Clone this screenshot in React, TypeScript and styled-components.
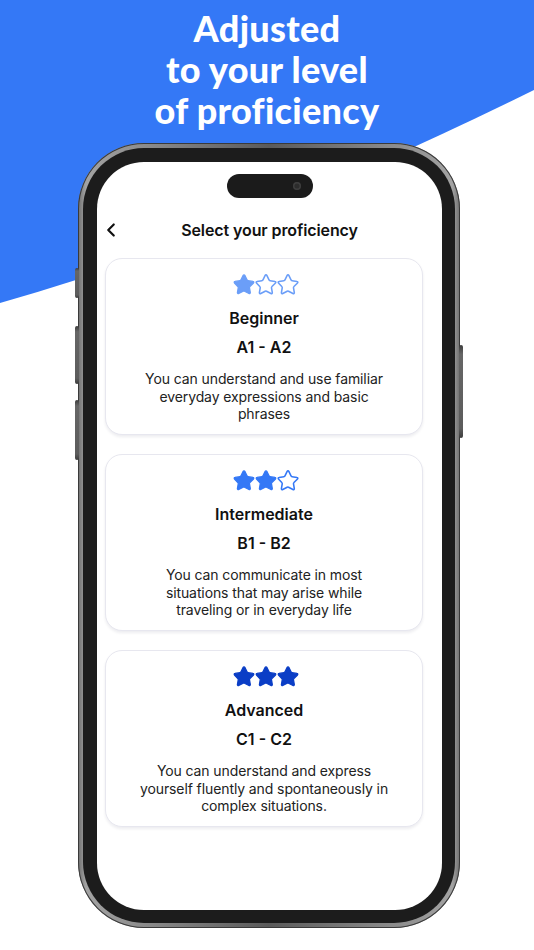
import React from "react";
import styled, { createGlobalStyle } from "styled-components";
import { ChevronLeft } from "lucide-react";

const GlobalStyle = createGlobalStyle`
  html, body {
    margin: 0;
    padding: 0;
    background: #fff;
  }
  * {
    box-sizing: border-box;
  }
`;

type Level = {
  stars: number;
  color: string;
  name: string;
  range: string;
  text: string;
};

const levels: Level[] = [
  {
    stars: 1,
    color: "#6b9ef8",
    name: "Beginner",
    range: "A1 - A2",
    text: "You can understand and use familiar everyday expressions and basic phrases",
  },
  {
    stars: 2,
    color: "#3478f6",
    name: "Intermediate",
    range: "B1 - B2",
    text: "You can communicate in most situations that may arise while traveling or in everyday life",
  },
  {
    stars: 3,
    color: "#0b3ec6",
    name: "Advanced",
    range: "C1 - C2",
    text: "You can understand and express yourself fluently and spontaneously in complex situations.",
  },
];

const StarIcon = ({ color, filled }: { color: string; filled: boolean }) => (
  <svg width="22" height="22" viewBox="0 0 24 24">
    <path
      d="M11.1 2.6a1 1 0 0 1 1.8 0l2.4 4.9a1.6 1.6 0 0 0 1.2.9l5.3.8a1 1 0 0 1 .6 1.7l-3.9 3.8a1.6 1.6 0 0 0-.5 1.4l.9 5.3a1 1 0 0 1-1.5 1l-4.8-2.5a1.6 1.6 0 0 0-1.5 0l-4.8 2.5a1 1 0 0 1-1.5-1l.9-5.3a1.6 1.6 0 0 0-.5-1.4L1.6 10.9a1 1 0 0 1 .6-1.7l5.3-.8a1.6 1.6 0 0 0 1.2-.9z"
      fill={filled ? color : "#fff"}
      stroke={color}
      strokeWidth={filled ? 1.4 : 1.7}
      strokeLinejoin="round"
    />
  </svg>
);

export default function App() {
  return (
    <>
      <GlobalStyle />
      <Page>
        <Backdrop viewBox="0 0 534 950" preserveAspectRatio="none">
          <path d="M0 0H534V90Q240 235 0 303Z" fill="#3478f6" />
        </Backdrop>
        <Headline>
          Adjusted
          <br />
          to your level
          <br />
          of proficiency
        </Headline>
        <PhoneFrame>
          <SideButton $side="left" $top={125} $height={30} />
          <SideButton $side="left" $top={183} $height={58} />
          <SideButton $side="left" $top={257} $height={60} />
          <SideButton $side="right" $top={202} $height={93} />
          <Bezel>
            <Screen>
              <Island>
                <Camera />
              </Island>
              <Header>
                <BackButton>
                  <ChevronLeft size={22} strokeWidth={2.4} color="#111" />
                </BackButton>
                <HeaderTitle>Select your proficiency</HeaderTitle>
                <span />
              </Header>
              <CardList>
                {levels.map((level) => (
                  <Card key={level.name}>
                    <Stars>
                      {[0, 1, 2].map((i) => (
                        <StarIcon key={i} color={level.color} filled={i < level.stars} />
                      ))}
                    </Stars>
                    <CardTitle>{level.name}</CardTitle>
                    <CardRange>{level.range}</CardRange>
                    <CardText>{level.text}</CardText>
                  </Card>
                ))}
              </CardList>
            </Screen>
          </Bezel>
        </PhoneFrame>
      </Page>
    </>
  );
}

const Page = styled.div`
  position: relative;
  width: 534px;
  height: 950px;
  overflow: hidden;
  background: #fff;
  font-family: Inter, "Noto Sans", sans-serif;
`;

const Backdrop = styled.svg`
  position: absolute;
  top: 0;
  left: 0;
  width: 534px;
  height: 950px;
`;

const Headline = styled.h1`
  position: relative;
  margin: 0;
  padding-top: 8px;
  text-align: center;
  color: #fff;
  font-family: Lato, "Open Sans", sans-serif;
  font-weight: 900;
  font-size: 36px;
  line-height: 41px;
  letter-spacing: 0.3px;
`;

const PhoneFrame = styled.div`
  position: relative;
  width: 382px;
  height: 785px;
  margin: 12px 0 0 78px;
  padding: 5px;
  border-radius: 66px;
  background: linear-gradient(90deg, #6e6e6e, #a3a3a3 2%, #5a5a5a 50%, #a3a3a3 98%, #6e6e6e);
  box-shadow: inset 0 0 0 1px #3a3a3a;
`;

const SideButton = styled.div<{ $side: "left" | "right"; $top: number; $height: number }>`
  position: absolute;
  top: ${(p) => p.$top}px;
  ${(p) => (p.$side === "left" ? "left: -3px;" : "right: -3px;")}
  width: 4px;
  height: ${(p) => p.$height}px;
  border-radius: 2px;
  background: linear-gradient(180deg, #3c3c3c, #666 10%, #5c5c5c 90%, #3c3c3c);
`;

const Bezel = styled.div`
  width: 100%;
  height: 100%;
  padding: 14px 13px 13px 14px;
  border-radius: 61px;
  background: #1c1c1c;
`;

const Screen = styled.div`
  display: flex;
  flex-direction: column;
  width: 100%;
  height: 100%;
  border-radius: 47px;
  background: #fff;
  overflow: hidden;
`;

const Island = styled.div`
  position: relative;
  align-self: center;
  width: 86px;
  height: 24px;
  margin-top: 12px;
  margin-left: 1px;
  border-radius: 12px;
  background: #1b1b1b;
`;

const Camera = styled.div`
  position: absolute;
  right: 12px;
  top: 8px;
  width: 8px;
  height: 8px;
  border-radius: 50%;
  background: #2c2c2c;
  box-shadow: inset 0 0 0 1.5px #3e3e3e;
`;

const Header = styled.div`
  display: grid;
  grid-template-columns: 1fr auto 1fr;
  align-items: center;
  height: 40px;
  margin-top: 12px;
`;

const BackButton = styled.div`
  display: flex;
  align-items: center;
  margin-left: 3px;
`;

const HeaderTitle = styled.div`
  font-size: 16px;
  font-weight: 600;
  color: #111;
  letter-spacing: -0.1px;
`;

const CardList = styled.div`
  display: flex;
  flex-direction: column;
  gap: 19px;
  margin-top: 8px;
  padding: 0 19px 0 8px;
`;

const Card = styled.div`
  display: flex;
  flex-direction: column;
  align-items: center;
  height: 177px;
  padding: 14px 20px 0;
  border: 1px solid #e7e7ef;
  border-radius: 17px;
  background: #fff;
  box-shadow: 0 2px 3px rgba(20, 20, 60, 0.08);
  text-align: center;
`;

const Stars = styled.div`
  display: flex;
  height: 22px;
  margin-left: 3px;
`;

const CardTitle = styled.div`
  margin-top: 13px;
  font-size: 16px;
  line-height: 20px;
  font-weight: 600;
  color: #111;
`;

const CardRange = styled.div`
  margin-top: 9px;
  font-size: 16px;
  line-height: 20px;
  font-weight: 600;
  color: #111;
`;

const CardText = styled.div`
  margin-top: 13px;
  max-width: 255px;
  font-size: 14px;
  line-height: 17.5px;
  letter-spacing: -0.1px;
  color: #222;
`;
